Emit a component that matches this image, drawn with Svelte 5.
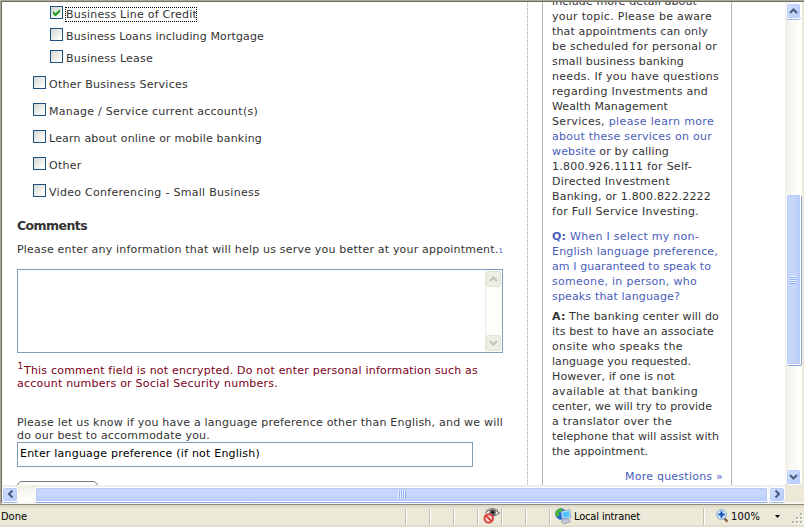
<script>
  function fit(node, width) {
    const natural = node.getBoundingClientRect().width;
    const count = node.textContent.length;
    if (count) node.style.letterSpacing = `${(width - natural) / count}px`;
  }

  const options = [
    { label: 'Business Line of Credit', w: 131, sub: true, checked: true, gap: 9 },
    { label: 'Business Loans including Mortgage', w: 198, sub: true, gap: 9 },
    { label: 'Business Lease', w: 87, sub: true, gap: 13 },
    { label: 'Other Business Services', w: 139, gap: 14 },
    { label: 'Manage / Service current account(s)', w: 209, gap: 14 },
    { label: 'Learn about online or mobile banking', w: 213, gap: 14 },
    { label: 'Other', w: 32.5, gap: 14 },
    { label: 'Video Conferencing - Small Business', w: 211, gap: 0 }
  ];

  const intro = [
    ['include more detail about', '', '', 145],
    ['your topic. Please be aware', '', '', 160],
    ['that appointments can only', '', '', 156],
    ['be scheduled for personal or', '', '', 165],
    ['small business banking', '', '', 132],
    ['needs. If you have questions', '', '', 167],
    ['regarding Investments and', '', '', 156],
    ['Wealth Management', '', '', 116],
    ['Services, ', 'please learn more', '', 162],
    ['', 'about these services on our', '', 160],
    ['', 'website', ' or by calling', 117],
    ['1.800.926.1111 for Self-', '', '', 140],
    ['Directed Investment', '', '', 118],
    ['Banking, or 1.800.822.2222', '', '', 159],
    ['for Full Service Investing.', '', '', 147]
  ];

  const question = [
    ['Q:', ' When I select my non-', 147],
    ['', 'English language preference,', 166],
    ['', 'am I guaranteed to speak to', 159],
    ['', 'someone, in person, who', 145],
    ['', 'speaks that language?', 128]
  ];

  const answer = [
    ['A:', ' The banking center will do', 167],
    ['', 'its best to have an associate', 162],
    ['', 'onsite who speaks the', 131],
    ['', 'language you requested.', 139],
    ['', 'However, if one is not', 123],
    ['', 'available at that banking', 146],
    ['', 'center, we will try to provide', 160],
    ['', 'a translator over the', 120],
    ['', 'telephone that will assist with', 167],
    ['', 'the appointment.', 96]
  ];
</script>

{#snippet arrow(dir)}
  <svg class="arrow {dir}" viewBox="0 0 9 6" width="9" height="6">
    <path d="M1 5 L4.5 1.5 L8 5" fill="none" stroke="currentColor" stroke-width="2.2" />
  </svg>
{/snippet}

<div class="window">
  <div class="frame">
    <div class="view">
      <main>
        <div class="options">
          {#each options as o}
            <div class="option" class:sub={o.sub} style:margin-bottom="{o.gap}px">
              <span class="box">
                {#if o.checked}
                  <svg viewBox="0 0 11 11" width="11" height="11"><path d="M2 4v3l2 2h1l4-4V2L4.5 6.3z" fill="#21a121" /></svg>
                {/if}
              </span>
              <span class="label" class:focus={o.checked}><span use:fit={o.w}>{o.label}</span></span>
            </div>
          {/each}
        </div>
        <h2><span use:fit={70}>Comments</span></h2>
        <p class="prompt"><span use:fit={481.5}>Please enter any information that will help us serve you better at your appointment.</span><a href="#note">1</a></p>
        <div class="area">
          <div class="area-scroll">
            <div class="abtn">{@render arrow('up')}</div>
            <div class="abtn">{@render arrow('down')}</div>
          </div>
        </div>
        <div class="note">
          <div class="line"><span class="sup">1</span><span use:fit={454}>This comment field is not encrypted. Do not enter personal information such as</span></div>
          <div class="line"><span use:fit={261}>account numbers or Social Security numbers.</span></div>
        </div>
        <div class="language">
          <div class="line"><span use:fit={486}>Please let us know if you have a language preference other than English, and we will</span></div>
          <div class="line"><span use:fit={193}>do our best to accommodate you.</span></div>
        </div>
        <div class="input"><span use:fit={240}>Enter language preference (if not English)</span></div>
        <div class="button"></div>
      </main>
      <aside>
        <div class="card">
          <div class="block">
            {#each intro as [a, link, b, w]}
              <div class="row"><span use:fit={w}>{a}{#if link}<a href="#services">{link}</a>{/if}{b}</span></div>
            {/each}
          </div>
          <div class="block q">
            {#each question as [b, t, w]}
              <div class="row"><span use:fit={w}>{#if b}<b>{b}</b>{/if}{t}</span></div>
            {/each}
          </div>
          <div class="block a">
            {#each answer as [b, t, w]}
              <div class="row"><span use:fit={w}>{#if b}<b>{b}</b>{/if}{t}</span></div>
            {/each}
          </div>
          <div class="more"><a href="#more"><span use:fit={98}>More questions »</span></a></div>
        </div>
      </aside>
      <div class="vscroll">
        <div class="sbtn">{@render arrow('up')}</div>
        <div class="vthumb"><i></i><i></i><i></i><i></i></div>
        <div class="sbtn last">{@render arrow('down')}</div>
      </div>
    </div>
    <div class="bottom">
      <div class="hscroll">
        <div class="sbtn">{@render arrow('left')}</div>
        <div class="hthumb"><i></i><i></i><i></i><i></i></div>
        <div class="sbtn">{@render arrow('right')}</div>
      </div>
    </div>
  </div>

  <footer>
    <div class="cell done"><span use:fit={26}>Done</span></div>
    <div class="cell"></div>
    <div class="cell"></div>
    <div class="cell"></div>
    <div class="cell">
      <svg width="18" height="18" viewBox="0 0 18 18">
        <path d="M2 6.5 Q9 -1 16.5 6 Q10 11 3 8" fill="#fff" stroke="#555" />
        <path d="M2.5 4 Q8.5 -1 15 3.5" fill="none" stroke="#888" />
        <circle cx="9.7" cy="5.6" r="2.8" fill="#888" stroke="#333" stroke-width=".8" />
        <circle cx="9.7" cy="5.4" r="1.4" fill="#000" />
        <circle cx="5.7" cy="11.4" r="4.2" fill="#f7dad6" stroke="#d53a33" stroke-width="1.9" />
        <path d="M3 8.6 L8.5 14.2" stroke="#d53a33" stroke-width="1.9" />
      </svg>
    </div>
    <div class="cell"></div>
    <div class="cell"></div>
    <div class="cell zone">
      <svg width="17" height="17" viewBox="0 0 17 17">
        <circle cx="6" cy="6" r="5.7" fill="#2463d3" />
        <path d="M1 3 Q5-1 8 1 L7 4 L4 4 L4.5 7 L3 9 Q-1 7 1 3z" fill="#48b735" />
        <path d="M6 3.5 L15 1.5 L15.8 10 L7.3 11z" fill="#dfe9f3" stroke="#7c9cc2" stroke-width=".8" />
        <path d="M7.2 4.5 L14 2.9 L14.6 9 L8.2 9.8z" fill="#50c4f8" />
        <path d="M10 11 L13 10.7 L15.5 13.5 L9.5 15.8 L6 13.5z" fill="#c4cedd" stroke="#8292ab" stroke-width=".7" />
      </svg>
      <span class="status-text" use:fit={66}>Local intranet</span>
    </div>
    <div class="zoom">
      <svg width="13" height="14" viewBox="0 0 13 14">
        <path d="M8 9 L11.5 12.7" stroke="#8b6546" stroke-width="2.5" />
        <circle cx="5.5" cy="5.5" r="4.8" fill="#d9efff" stroke="#7aa0c8" />
        <path d="M5.5 2.3v6.4M2.3 5.5h6.4" stroke="#1252b4" stroke-width="2" />
      </svg>
      <span class="pct" use:fit={29}>100%</span>
      <svg class="drop" width="5" height="3" viewBox="0 0 5 3"><path d="M0 0h5L2.5 3z" fill="#000" /></svg>
      <svg class="grip" width="12" height="12" viewBox="0 0 12 12">
        {#each [[8, 0], [4, 4], [8, 4], [0, 8], [4, 8], [8, 8]] as [x, y]}
          <rect x={x + 1} y={y + 1} width="2" height="2" fill="#fff" />
          <rect {x} {y} width="2" height="2" fill="#b8b4a2" />
        {/each}
      </svg>
    </div>
  </footer>
</div>

<style>
  :global(body) { margin: 0; overflow: hidden; }
  * { box-sizing: border-box; }
  .window {
    width: 804px; height: 527px; display: flex; flex-direction: column; overflow: hidden;
    background: #ece9d8; color: #333; white-space: nowrap;
    font: 11px/15px "DejaVu Sans", Verdana, sans-serif;
  }
  .frame {
    height: 505px; border-left: 1px solid #aca899; border-top: 1px solid #aca899;
    border-bottom: 1px solid #8f8b7c; display: flex; flex-direction: column;
  }
  .view {
    height: 484px; display: flex; background: #fff; overflow: hidden;
    border-left: 1px solid #716f64; border-top: 1px solid #716f64;
  }
  a { color: #4a5dbb; text-decoration: none; }
  main { width: 526px; height: 483px; padding: 4px 0 0 15px; border-right: 1px dotted #aaa; overflow: hidden; flex: none; }
  .options { height: 211px; }
  .option { display: flex; height: 13px; margin-left: 16px; }
  .option.sub { margin-left: 33px; }
  .box { width: 13px; height: 13px; flex: none; border: 1px solid #1c5180; background: linear-gradient(135deg, #d5d5d0, #fff 90%); }
  .box svg { display: block; }
  .label { height: 15px; margin: 1px 0 0 2px; padding-left: 1px; }
  .focus { outline: 1px dotted #000; outline-offset: -1px; }
  h2 { height: 22px; font-size: 12.5px; line-height: 15px; padding-top: 1px; }
  h2, .prompt, .note, .language { margin: 0; }
  .prompt { padding-top: 3px; height: 30px; }
  .prompt a { font-size: 7px; }
  .area { width: 486px; height: 84px; border: 1px solid #7f9db9; display: flex; justify-content: flex-end; }
  .area-scroll { width: 17px; background: #fdfdf9; border-left: 1px solid #eeede5; display: flex; flex-direction: column; justify-content: space-between; padding: 1px 1px 1px 0; }
  .abtn { width: 15px; height: 16px; border-radius: 2px; border: 1px solid #e3e1d6; background: #eeeee6; color: #c5c3b7; display: flex; align-items: center; justify-content: center; }
  .note { padding-top: 11px; height: 63px; color: #7a0019; }
  .line { height: 13px; line-height: 13px; display: flex; }
  .sup { font-size: 9px; width: 7px; position: relative; top: -4px; left: 0.5px; }
  .language { height: 26px; line-height: 13px; }
  .input { width: 456px; height: 25px; border: 1px solid #7f9db9; color: #000; padding: 3px 0 0 2px; }
  .button { margin-top: 14px; width: 81px; height: 22px; border: 1px solid #777; border-radius: 5px; }
  aside { width: 257px; padding-left: 14px; flex: none; }
  .card { width: 190px; height: 483px; border: solid #b4b4b4; border-width: 0 1px; padding-left: 9px; overflow: hidden; }
  .row { height: 15px; }
  .block { margin-top: -8px; }
  .block.q { margin-top: 10px; color: #4a5dbb; }
  .block.a { margin-top: 5px; }
  .more { margin-top: 10px; padding-left: 73px; }

  .arrow { display: block; flex: none; }
  .arrow.down { transform: rotate(180deg); }
  .arrow.left { transform: rotate(-90deg); }
  .arrow.right { transform: rotate(90deg); }
  .vscroll {
    width: 19px; display: flex; flex-direction: column; align-items: center; padding: 1px 1px 0 1px;
    background: linear-gradient(90deg, #f0efe8, #fefefa 80%); border-right: 2px solid #ece9d8;
  }
  .sbtn {
    width: 15px; height: 16px; flex: none; border: 1px solid #fff; border-radius: 3px; color: #4d6185;
    background: linear-gradient(135deg, #d5e1fd, #b5cbfa); box-shadow: inset 0 0 0 1px #b8cafa, 0 1px 0 #9db6e4;
    display: flex; align-items: center; justify-content: center;
  }
  .sbtn.last { margin-top: auto; }
  .vthumb {
    width: 15px; height: 171px; margin-top: 175px; border: 1px solid #fff; border-radius: 2px;
    background: linear-gradient(90deg, #c8d6fb 0 50%, #b6cefc); box-shadow: inset 0 0 0 1px #b8cafa, 1px 1px 0 #8ba8dc;
    display: flex; flex-direction: column; align-items: center; justify-content: center;
  }
  .vthumb i { width: 7px; height: 2px; background: linear-gradient(#eef4fe 50%, #8cb0f8 50%); }
  .bottom { height: 19px; background: #ece9d8; border-left: 1px solid #716f64; border-bottom: 2px solid #f7f6f0; }
  .hscroll { width: 783px; height: 17px; display: flex; align-items: center; padding-top: 1px; background: linear-gradient(#efeee6, #fefefa 80%); }
  .hscroll .sbtn { height: 15px; width: 16px; }
  .hthumb {
    width: 733px; height: 15px; margin: 0 1px 0 17px; border: 1px solid #fff; border-radius: 2px;
    background: linear-gradient(#c8d6fb 0 50%, #b6cefc); box-shadow: inset 0 0 0 1px #b8cafa, 0 1px 0 #8ba8dc;
    display: flex; align-items: center; justify-content: center;
  }
  .hthumb i { height: 7px; width: 2px; background: linear-gradient(90deg, #eef4fe 50%, #8cb0f8 50%); }

  footer {
    height: 22px; flex: none; display: flex; align-items: center; color: #000;
    font-family: "DejaVu Sans Condensed", Tahoma, sans-serif; font-stretch: condensed;
    background: linear-gradient(#d9d5c4, #ece9d8 4px, #ece9d8 19px, #dedac8);
  }
  .cell { width: 24px; height: 17px; flex: none; display: flex; align-items: center; border-right: 1px solid #fff; box-shadow: inset -1px 0 #c4c0af; }
  .cell.done { width: 407px; padding-left: 1px; }
  .cell svg { flex: none; margin-left: 4px; }
  .cell.zone { width: 154px; }
  .zone svg { margin-right: 2px; }
  .zoom { flex: 1; display: flex; align-items: center; }
  .zoom svg:first-child { margin-left: 11px; }
  .pct { margin-left: 2px; }
  .drop { margin-left: 15px; }
  .grip { margin: 6px 0 0 12px; flex: none; }
</style>
